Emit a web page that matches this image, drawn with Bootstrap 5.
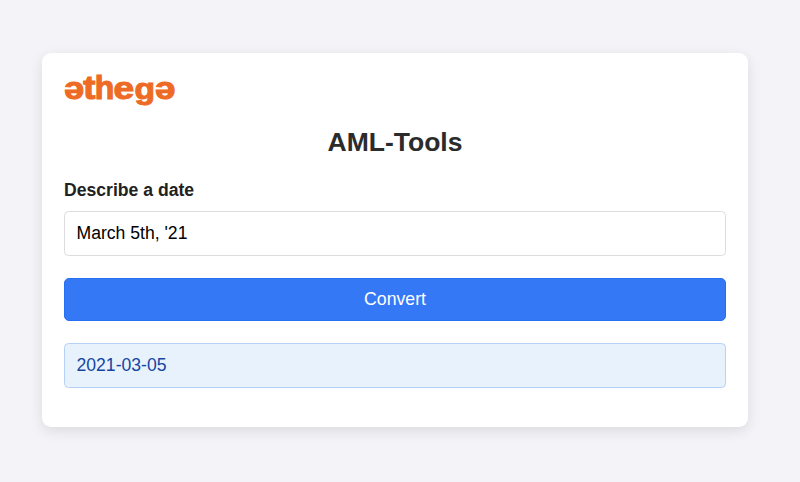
<!DOCTYPE html>
<html lang="en">
<head>
<meta charset="utf-8">
<meta name="viewport" content="width=device-width, initial-scale=1">
<title>AML-Tools</title>
<link href="https://cdn.jsdelivr.net/npm/bootstrap@5.3.0/dist/css/bootstrap.min.css" rel="stylesheet">
<style>
body { background: #f3f3f8; font-family: "Liberation Sans", Arial, sans-serif; font-size: 17.6px; color: #212121; height: 482px; overflow: hidden; }
.tool-card { width: 706px; height: 374px; margin: 53px 0 0 42px; padding: 22px; border: 0; border-radius: 9px; box-shadow: 0 4px 13px rgba(0,0,0,.1); }
.brand-logo { width: 112px; height: 34px; overflow: visible; font-weight: 700; font-size: 32px; fill: #ee6b25; stroke: #ee6b25; stroke-width: 1.1px; }
.tool-title { font-size: 26.5px; line-height: 32px; margin: 17px 0 22px; color: #2b2b2b; }
.form-label { line-height: 20px; margin-bottom: 11px; color: #212121; }
.form-control { height: 45px; padding: 0 11.5px; font-size: 17.6px; border-color: #dcdcdc; border-radius: 4.5px; color: #000; }
.btn-convert { height: 43px; margin-top: 22px; padding: 0; font-size: 17.7px; border-radius: 5px; --bs-btn-bg: #3478f6; --bs-btn-border-color: #2570f0; }
.result { height: 45px; margin: 21.5px 0 0; padding: 0 11.5px; background: #e8f2fd; border-color: #b5d2f6; border-radius: 4.5px; color: #1546a0; }
</style>
</head>
<body>
<main class="card tool-card">
  <svg class="brand-logo" viewBox="0 0 112 34" role="img" aria-label="əthegə">
    <text transform="translate(20.3 7) rotate(180) scale(1.13 1)">e</text>
    <text transform="translate(19.2 24.2) scale(1.14 1.02)">t</text>
    <text transform="translate(30.8 24.2) scale(1 1.03)">h</text>
    <text transform="translate(49.5 24.2) scale(1.16 1)">e</text>
    <text transform="translate(70.5 24) scale(1.05 .93)">g</text>
    <text transform="translate(111.4 7) rotate(180) scale(1.15 1)">e</text>
  </svg>
  <h1 class="tool-title fw-bold text-center">AML-Tools</h1>
  <form>
    <label class="form-label fw-bold d-block" for="date">Describe a date</label>
    <input class="form-control" id="date" type="text" value="March 5th, '21">
    <button class="btn btn-primary btn-convert w-100 d-block" type="button">Convert</button>
    <div class="alert result d-flex align-items-center">2021-03-05</div>
  </form>
</main>
<script src="https://cdn.jsdelivr.net/npm/bootstrap@5.3.0/dist/js/bootstrap.bundle.min.js"></script>
</body>
</html>
